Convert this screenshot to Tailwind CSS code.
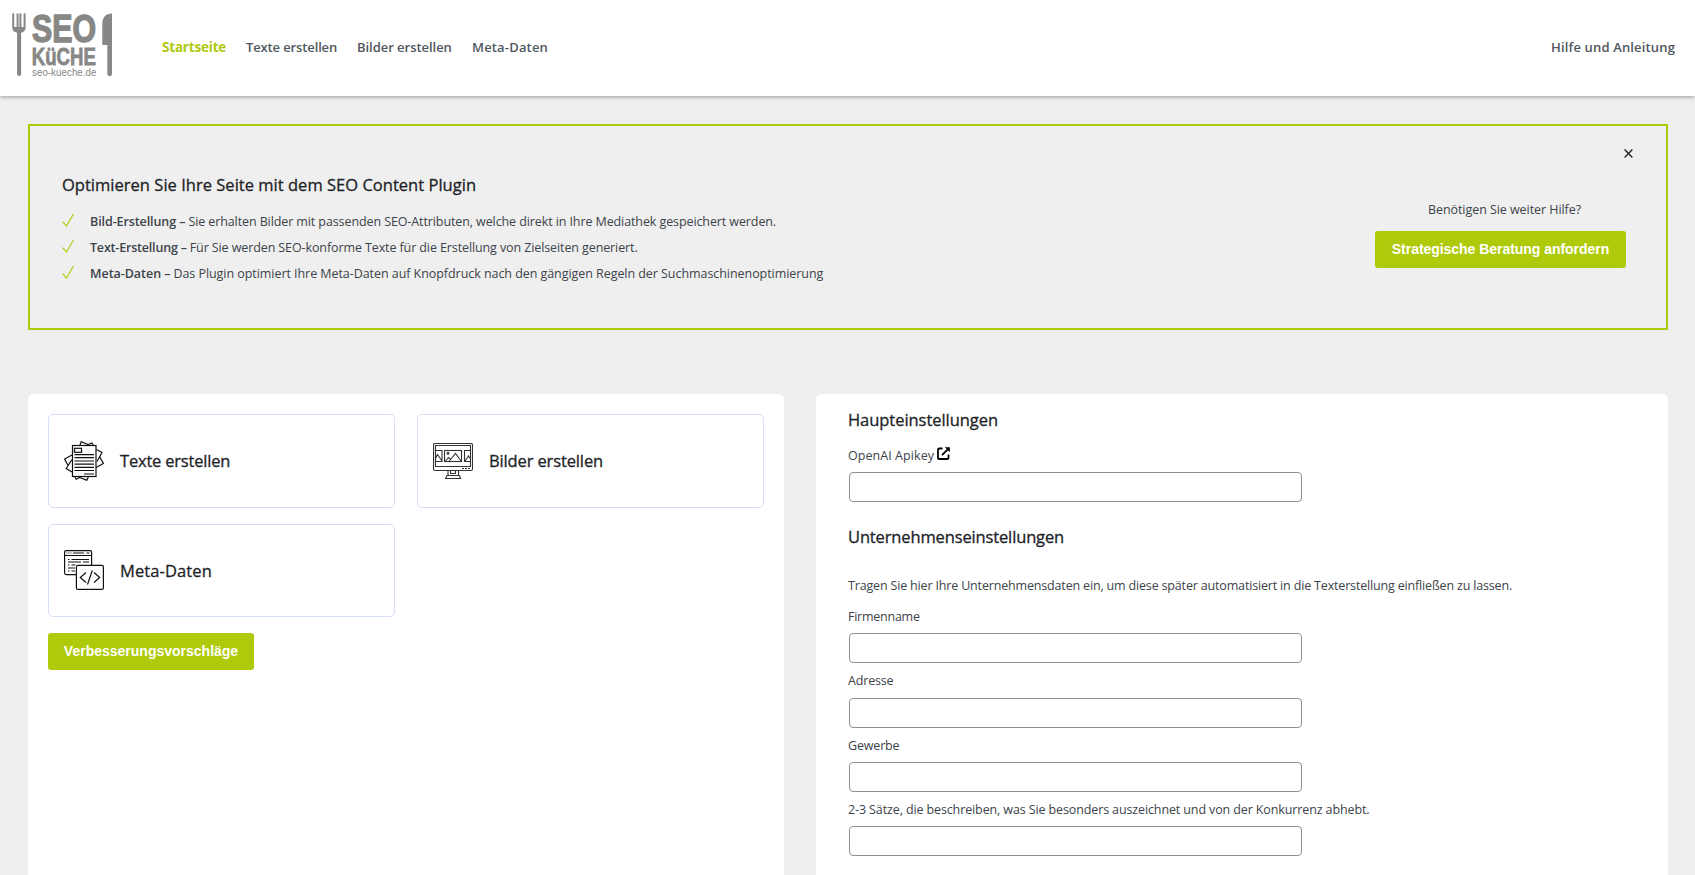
<!DOCTYPE html>
<html lang="de">
<head>
<meta charset="utf-8">
<title>SEO Content Plugin</title>
<script src="https://cdn.jsdelivr.net/npm/@tailwindcss/browser@4"></script>
</head>
<body class="h-[875px] overflow-hidden bg-[#efefef] font-['Open_Sans',sans-serif] text-[12.5px] leading-5 text-[#3c434a]">

<header class="flex h-24 items-center bg-white pr-[20px] pb-[3px] text-[13px] font-semibold text-[#50575e] shadow-[0_1px_4px_rgba(0,0,0,0.35)]">
  <svg class="h-[95px] w-[162px] shrink-0 self-start" viewBox="0 0 162 95" fill="#878785" font-family="Liberation Sans, sans-serif">
    <path d="M12.2 14.2a1 1 0 0 1 2 0V27h2.400V14.200a1 1 0 0 1 2 0V27h0.800V14.200a1 1 0 0 1 2 0V27h2.200V14.200a1 1 0 0 1 2 0V27c0 3.500-1.800 5-4.500 5.800V74a2 2 0 0 1-4 0V32.800c-3.200-.8-4.900-2.300-4.900-5.800z"/>
    <path d="M112 13.500V73.800a2.300 2.300 0 0 1-4.700 0V45H102.300V24c0-6.500 3.500-10.500 9.700-10.500z"/>
    <text x="32" y="42" font-size="39.500" font-weight="700" textLength="64" lengthAdjust="spacingAndGlyphs" stroke="#878785" stroke-width="1.500">SEO</text>
    <text x="31.800" y="64.500" font-size="24.500" font-weight="700" textLength="64" lengthAdjust="spacingAndGlyphs" stroke="#878785" stroke-width=".8">KüCHE</text>
    <text x="32" y="75.500" font-size="10" textLength="64.500" lengthAdjust="spacingAndGlyphs" font-weight="400">seo-kueche.de</text>
  </svg>
  <nav class="flex flex-1 items-center">
    <a class="w-[84px] text-[13.5px] font-bold tracking-[-0.2px] text-[#afca0b]">Startseite</a>
    <a class="w-[111px] tracking-[-0.13px]">Texte erstellen</a>
    <a class="w-[115px] tracking-[-0.04px]">Bilder erstellen</a>
    <a class="tracking-[0.17px]">Meta-Daten</a>
  </nav>
  <a class="tracking-[0.15px]">Hilfe und Anleitung</a>
</header>

<main class="px-7 pr-[27px] pt-7">
  <section class="relative flex h-[206px] justify-between border-2 border-[#afca0b] pr-10 pl-8">
    <div class="pt-[47px]">
      <h2 class="text-[16.5px] leading-6 font-medium tracking-[0.02px] text-[#1d2327] [-webkit-text-stroke:0.3px]">Optimieren Sie Ihre Seite mit dem SEO Content Plugin</h2>
      <ul class="mt-3 leading-[26px]">
        <li class="flex h-[26px]">
          <svg class="mt-[4px] mr-4 h-[14px] w-3" viewBox="0 0 12 14" fill="none" stroke="#afca0b" stroke-width="1.100"><path d="M.7 8.600 4.400 13 11.500 1"/></svg>
          <span><b class="mr-[3px] font-semibold tracking-[-0.09px]">Bild-Erstellung –</b><span class="tracking-[-0.1px]">Sie erhalten Bilder mit passenden SEO-Attributen, welche direkt in Ihre Mediathek gespeichert werden.</span></span>
        </li>
        <li class="flex h-[26px]">
          <svg class="mt-[4px] mr-4 h-[14px] w-3" viewBox="0 0 12 14" fill="none" stroke="#afca0b" stroke-width="1.100"><path d="M.7 8.600 4.400 13 11.500 1"/></svg>
          <span><b class="mr-[3px] font-semibold tracking-[-0.19px]">Text-Erstellung –</b><span class="tracking-[-0.105px]">Für Sie werden SEO-konforme Texte für die Erstellung von Zielseiten generiert.</span></span>
        </li>
        <li class="flex h-[26px]">
          <svg class="mt-[4px] mr-4 h-[14px] w-3" viewBox="0 0 12 14" fill="none" stroke="#afca0b" stroke-width="1.100"><path d="M.7 8.600 4.400 13 11.500 1"/></svg>
          <span><b class="mr-[3px] font-semibold tracking-[-0.04px]">Meta-Daten –</b><span class="tracking-[-0.056px]">Das Plugin optimiert Ihre Meta-Daten auf Knopfdruck nach den gängigen Regeln der Suchmaschinenoptimierung</span></span>
        </li>
      </ul>
    </div>
    <div class="w-[251px] pt-[74px]">
      <p class="pl-2 text-center tracking-[-0.06px]">Benötigen Sie weiter Hilfe?</p>
      <button class="mt-[11px] block h-[37px] w-full rounded-[3px] bg-[#afca0b] pb-[2px] font-['Liberation_Sans',sans-serif] text-[14px] font-bold tracking-[-0.04px] text-white">Strategische Beratung anfordern</button>
    </div>
    <button class="absolute top-[23px] right-[33px]" aria-label="Schließen">
      <svg class="size-[9px]" viewBox="0 0 9 9" fill="none" stroke="#1d2327" stroke-width="1.400"><path d="M.6.6l7.800 7.800M8.400.6.6 8.400"/></svg>
    </button>
  </section>

  <div class="mt-16 flex gap-8">
    <section class="h-[500px] w-[756px] rounded-[5px] bg-white p-5">
      <div class="grid grid-cols-[347px_347px] gap-x-[22px] gap-y-4 text-[16.5px] font-medium text-[#1d2327] [-webkit-text-stroke:0.3px]">
        <a class="flex h-[94px] items-center gap-4 rounded-[5px] border border-[#d5e0f4] pl-[15px]">
          <svg class="size-10" viewBox="0 0 40 40" fill="none" stroke="#111" stroke-width="1.200">
            <path d="M8 14 .6 18 3.800 24M8 18.500 2.200 27.500 8 31M32.500 8.500 38 11.500 33 20.500M35.800 16 39.400 22.500 32 26.500M16 4 17.300.7 24.500 3.800M23 4 28 2 29.200 4M11 36 12.200 38.200 16 36.300M16 36.500 22.800 39.300 24.300 36"/>
            <rect x="8.500" y="4.500" width="23.500" height="31" fill="#fff"/>
            <rect x="10.500" y="7.300" width="7" height="4"/>
            <path d="M10.500 13.700H30M10.500 16.700H30M10.500 20H30M10.500 23.200H30M10.500 26.300H30M10.500 29.500H30M20 33H30"/>
          </svg>
          <span class="tracking-[-0.2px]">Texte erstellen</span>
        </a>
        <a class="flex h-[94px] items-center gap-4 rounded-[5px] border border-[#d5e0f4] pl-[15px]">
          <svg class="size-10" viewBox="0 0 40 40" fill="none" stroke="#333" stroke-width="1.100">
            <rect x=".5" y="2.500" width="39" height="27" rx="1.500"/>
            <path d="M2.500 25.500V4.500H37.500V25.500ZM29 27.500h2M32 27.500h2M35 27.500h2"/>
            <rect x="11.500" y="9.500" width="17" height="11"/>
            <circle cx="15" cy="12.300" r="1"/>
            <path d="M12 20.500 15.500 16.500 17.500 18.500 22.500 12.500 28 20M16 20.500 18 18M2.500 9.500H9V20.500H2.500M2.500 17.500 4.500 13.500 9 20M37.500 9.500H31.500V20.500H37.500M32 20 35.500 15 37.500 18"/>
            <path d="M15 29.500V34.500M25.500 29.500V34.500M17.500 29.500V32.500H22.500V29.500M14 34.500H26.500L27.500 37.500H12.500Z"/>
          </svg>
          <span class="tracking-[-0.13px]">Bilder erstellen</span>
        </a>
        <a class="flex h-[93px] items-center gap-4 rounded-[5px] border border-[#d5e0f4] pl-[15px]">
          <svg class="mb-px size-10" viewBox="0 0 40 40" fill="none" stroke="#111" stroke-width="1.200">
            <rect x=".6" y=".6" width="27" height="24" rx="1.500"/>
            <path d="M.6 5.500H27.600M2.500 3h1M4.500 3h1M6.500 3h1M9 3H20M22.500 3h3M4 9.500h1.500M7.500 9.500H25M4 12H17M19 12h6M4 15h1.500M7.500 15h4M4 18h7M4 21h1.500M7.500 21h3.500"/>
            <rect x="12.400" y="15.400" width="27" height="24" rx="1.500" fill="#fff"/>
            <path d="M22 22.500 16.300 27.500 22 32.500M30 22.500 35.700 27.500 30 32.500M28.300 20.500 23.500 34.500"/>
          </svg>
          <span class="tracking-[0.1px]">Meta-Daten</span>
        </a>
      </div>
      <button class="mt-4 block h-[37px] w-[206px] rounded-[3px] bg-[#afca0b] pb-[2px] font-['Liberation_Sans',sans-serif] text-[14px] font-bold text-white">Verbesserungsvorschläge</button>
    </section>

    <section class="h-[500px] w-[852px] rounded-[5px] bg-white pt-[14px] pl-8">
      <h2 class="text-[16.5px] leading-6 font-medium tracking-[-0.05px] text-[#1d2327] [-webkit-text-stroke:0.3px]">Haupteinstellungen</h2>
      <div class="mt-[14px] flex h-5 gap-[3px]">
        <label class="tracking-[0.06px]">OpenAI Apikey</label>
        <svg class="mt-px size-[13px]" viewBox="0 0 13 13" fill="none" stroke="#000" stroke-width="1.800"><path d="M5.500 1.500H2A1 1 0 0 0 1 2.500V11A1 1 0 0 0 2 12H10.500A1 1 0 0 0 11.500 11V7.500M5 8.200 11 2.200"/><path d="M7.800.2H12.800V5.200Z" fill="#000" stroke="none"/></svg>
      </div>
      <input class="mt-[6px] ml-px block h-[30px] w-[453px] rounded-[4px] border border-[#8c8f94] bg-white">
      <h2 class="mt-[23px] text-[16.5px] leading-6 font-medium tracking-[-0.14px] text-[#1d2327] [-webkit-text-stroke:0.3px]">Unternehmenseinstellungen</h2>
      <p class="mt-[27px] tracking-[-0.167px]">Tragen Sie hier Ihre Unternehmensdaten ein, um diese später automatisiert in die Texterstellung einfließen zu lassen.</p>
      <label class="mt-[11px] block tracking-[-0.25px]">Firmenname</label>
      <input class="mt-[6px] ml-px block h-[30px] w-[453px] rounded-[4px] border border-[#8c8f94] bg-white">
      <label class="mt-[8px] block tracking-[-0.17px]">Adresse</label>
      <input class="mt-[7px] ml-px block h-[30px] w-[453px] rounded-[4px] border border-[#8c8f94] bg-white">
      <label class="mt-[8px] block tracking-[-0.17px]">Gewerbe</label>
      <input class="mt-[6px] ml-px block h-[30px] w-[453px] rounded-[4px] border border-[#8c8f94] bg-white">
      <label class="mt-[8px] block tracking-[-0.118px]">2-3 Sätze, die beschreiben, was Sie besonders auszeichnet und von der Konkurrenz abhebt.</label>
      <input class="mt-[6px] ml-px block h-[30px] w-[453px] rounded-[4px] border border-[#8c8f94] bg-white">
    </section>
  </div>
</main>
</body>
</html>
